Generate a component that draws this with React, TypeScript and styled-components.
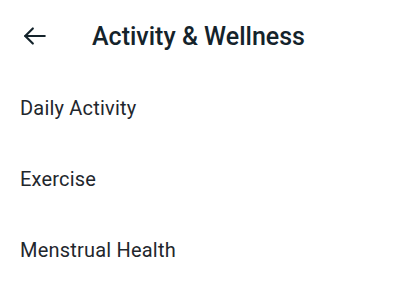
import styled, { createGlobalStyle } from "styled-components";

const GlobalStyle = createGlobalStyle`
  body {
    margin: 0;
    background: #ffffff;
    font-family: Roboto, "Noto Sans", sans-serif;
  }
`;

const Screen = styled.div`
  display: flex;
  flex-direction: column;
  width: 400px;
  height: 293px;
  overflow: hidden;
`;

const TopBar = styled.header`
  display: flex;
  align-items: center;
  height: 72px;
  padding-left: 22px;
`;

const BackButton = styled.button`
  display: flex;
  align-items: center;
  justify-content: center;
  width: 26px;
  height: 26px;
  padding: 0;
  border: none;
  background: none;
  color: #14232b;
  cursor: pointer;
`;

const Title = styled.h1`
  margin: 0 0 0 44px;
  font-size: 25px;
  font-weight: 500;
  color: #14232b;
`;

const List = styled.ul`
  display: flex;
  flex-direction: column;
  margin: 0;
  padding: 0;
  list-style: none;
`;

const Item = styled.li`
  display: flex;
  align-items: center;
  height: 71px;
  padding-left: 20px;
  font-size: 20px;
  letter-spacing: 0.2px;
  color: #1f272d;
`;

const items = ["Daily Activity", "Exercise", "Menstrual Health"];

export default function App() {
  return (
    <Screen>
      <GlobalStyle />
      <TopBar>
        <BackButton aria-label="Back">
          <svg width="26" height="26" viewBox="0 0 24 24" fill="none" stroke="currentColor" strokeWidth="2" strokeLinecap="round" strokeLinejoin="round">
            <path d="M21 12H3" />
            <path d="M10 5l-7 7 7 7" />
          </svg>
        </BackButton>
        <Title>Activity &amp; Wellness</Title>
      </TopBar>
      <List>
        {items.map((label) => (
          <Item key={label}>{label}</Item>
        ))}
      </List>
    </Screen>
  );
}
